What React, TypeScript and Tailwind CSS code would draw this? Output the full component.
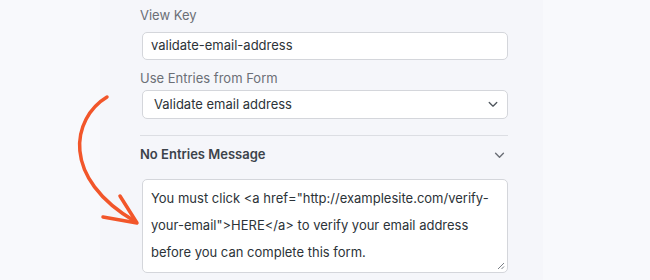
import React from "react";

const Chevron = ({ className }: { className?: string }) => (
  <svg viewBox="0 0 12 8" className={className} fill="none">
    <path d="M1.5 1.5 L6 6 L10.5 1.5" stroke="currentColor" strokeWidth="1.6" strokeLinecap="round" strokeLinejoin="round" />
  </svg>
);

const App = () => {
  return (
    <div className="relative h-[280px] w-[650px] overflow-hidden bg-[#f8f9fc] font-['Inter','Liberation_Sans',sans-serif]">
      <div className="ml-[100px] h-full w-[443px] bg-[#f5f6fa] pl-[40px] pr-[35px] pt-[6px]">
        <div className="text-[13px] leading-[18px] text-[#6b6f76]">View Key</div>
        <div className="ml-[2px] mt-[8px] flex h-[28px] items-center rounded-[5px] border border-[#d4d6db] bg-white pl-[8px] text-[13px] text-[#2c3338]">
          validate-email-address
        </div>
        <div className="mt-[9px] text-[13px] leading-[18px] text-[#6b6f76]">Use Entries from Form</div>
        <div className="ml-[2px] mt-[3px] flex h-[29px] items-center justify-between rounded-[5px] border border-[#d4d6db] bg-white pl-[11px] pr-[9px] text-[13px] text-[#2c3338]">
          <span>Validate email address</span>
          <Chevron className="h-[7px] w-[10px] text-[#50575e]" />
        </div>
        <div className="mt-[16px] h-px bg-[#dcdee3]" />
        <div className="mt-[10px] flex h-[18px] items-center justify-between pr-[3px]">
          <span className="text-[13px] font-semibold text-[#3c434a]">No Entries Message</span>
          <Chevron className="h-[7px] w-[11px] text-[#6b6f76]" />
        </div>
        <div className="relative ml-[2px] mt-[15px] h-[94px] rounded-[5px] border border-[#d4d6db] bg-white pl-[8px] pr-[6px] pt-[5px] text-[13px] leading-[27px] text-[#2c3338]">
          You must click &lt;a href="http://examplesite.com/verify-your-email"&gt;HERE&lt;/a&gt; to verify your email address before you can complete this form.
          <svg viewBox="0 0 8 8" className="absolute bottom-[2px] right-[2px] h-[8px] w-[8px]" fill="none">
            <path d="M7 1 L1 7 M7 4.5 L4.5 7" stroke="#7a7f86" strokeWidth="1" />
          </svg>
        </div>
      </div>
      <svg className="pointer-events-none absolute left-0 top-0" width="650" height="280" fill="none">
        <path d="M107 97 C 72 118, 60 178, 136 222" stroke="#f2562a" strokeWidth="3.5" strokeLinecap="round" />
        <path d="M120 196 L137 223 L103 217" stroke="#f2562a" strokeWidth="3.5" strokeLinecap="round" strokeLinejoin="round" />
      </svg>
    </div>
  );
};

export default App;
